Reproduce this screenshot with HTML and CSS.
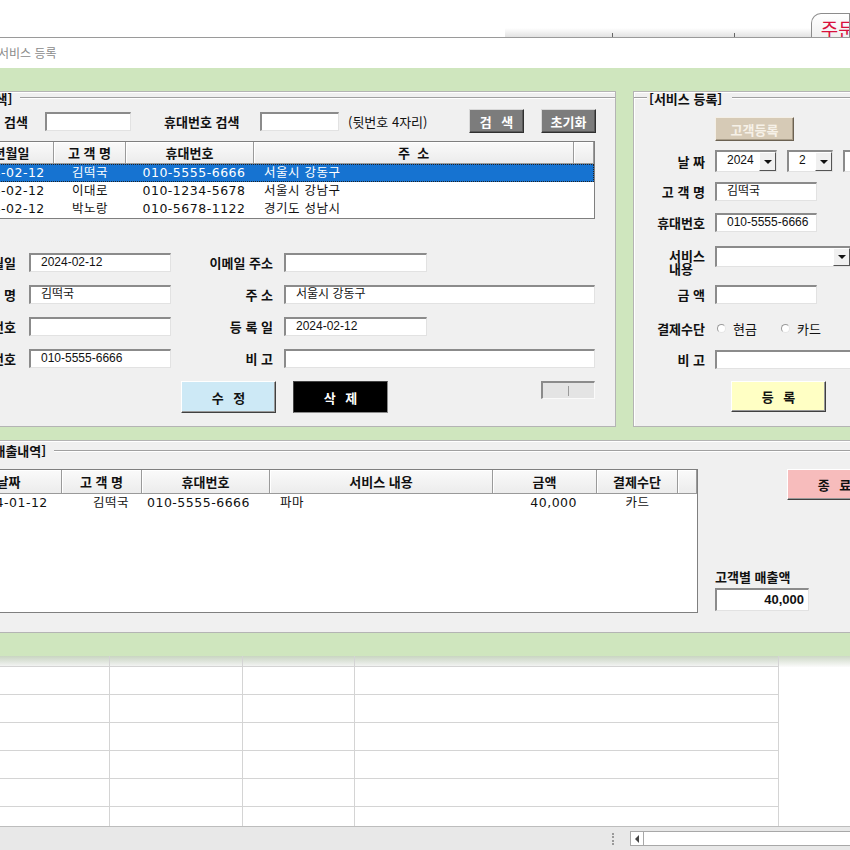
FILE: index.html
```html
<!DOCTYPE html>
<html lang="ko">
<head>
<meta charset="utf-8">
<title>서비스 등록</title>
<link rel="stylesheet" href="styles.css">
</head>
<body>
<div class="screen">
  <header class="topbar">
    <div class="toolstrip"><span class="tick t1"></span><span class="tick t2"></span></div>
    <div class="tab"><span>주문</span></div>
  </header>
  <div class="titlebar">서비스 등록</div>

  <main class="form-area">
    <div class="upper">
      <!-- customer search panel -->
      <section class="panel panel-search">
        <div class="gtitle"><span class="gtext">[고객 검색]</span><span class="gline"></span></div>

        <div class="srow">
          <div class="lbl sl1">고객명 검색</div>
          <div class="inp si1"></div>
          <div class="lbl sl2">휴대번호 검색</div>
          <div class="inp si2"></div>
          <div class="hint">(뒷번호 4자리)</div>
          <div class="btn btn-gray bs1">검 색</div>
          <div class="btn btn-gray bs2">초기화</div>
        </div>

        <div class="lv lv-cust">
          <div class="lv-head g-cust">
            <div class="th">생년월일</div>
            <div class="th">고 객 명</div>
            <div class="th">휴대번호</div>
            <div class="th">주 &nbsp;소</div>
            <div class="th"></div>
          </div>
          <div class="tr g-cust active">
            <div class="td c">2024-02-12</div><div class="td c">김떡국</div><div class="td c p8">010-5555-6666</div><div class="td l">서울시 강동구</div><div class="td"></div>
          </div>
          <div class="tr g-cust">
            <div class="td c">2024-02-12</div><div class="td c">이대로</div><div class="td c p8">010-1234-5678</div><div class="td l">서울시 강남구</div><div class="td"></div>
          </div>
          <div class="tr g-cust">
            <div class="td c">2024-02-12</div><div class="td c">박노랑</div><div class="td c p8">010-5678-1122</div><div class="td l">경기도 성남시</div><div class="td"></div>
          </div>
        </div>

        <div class="frow first">
          <div class="lbl fl-left">생년월일</div><div class="inp in-left">2024-02-12</div>
          <div class="lbl fl-right">이메일 주소</div><div class="inp in-right"></div>
        </div>
        <div class="frow">
          <div class="lbl fl-left">고 객 명</div><div class="inp in-left">김떡국</div>
          <div class="lbl fl-right">주 소</div><div class="inp in-right wide">서울시 강동구</div>
        </div>
        <div class="frow">
          <div class="lbl fl-left">전화번호</div><div class="inp in-left"></div>
          <div class="lbl fl-right">등 록 일</div><div class="inp in-right">2024-02-12</div>
        </div>
        <div class="frow">
          <div class="lbl fl-left">휴대번호</div><div class="inp in-left">010-5555-6666</div>
          <div class="lbl fl-right">비 고</div><div class="inp in-right wide"></div>
        </div>

        <div class="brow">
          <div class="btn btn-edit">수 정</div>
          <div class="btn btn-del">삭 제</div>
          <div class="mini"><span class="caret"></span></div>
        </div>
      </section>

      <!-- service registration panel -->
      <section class="panel panel-service">
        <div class="gtitle"><span class="gline short"></span><span class="gtext pad">[서비스 등록]</span><span class="gline"></span></div>

        <div class="btn btn-cust">고객등록</div>

        <div class="rrow m9">
          <div class="lbl rl">날 짜</div>
          <div class="combo-box s1"><span class="val">2024</span><span class="arrow"></span></div>
          <div class="combo-box s2"><span class="val">2</span><span class="arrow"></span></div>
          <div class="combo-box s3"><span class="val">12</span><span class="arrow"></span></div>
        </div>
        <div class="rrow m8">
          <div class="lbl rl">고 객 명</div>
          <div class="inp rin">김떡국</div>
        </div>
        <div class="rrow m9">
          <div class="lbl rl">휴대번호</div>
          <div class="inp rin">010-5555-6666</div>
        </div>
        <div class="rrow m12">
          <div class="lbl rl two"><span>서비스<br>내용</span></div>
          <div class="combo-box combo"><span class="val"></span><span class="arrow"></span></div>
        </div>
        <div class="rrow m16">
          <div class="lbl rl">금 액</div>
          <div class="inp rin"></div>
        </div>
        <div class="rrow m12">
          <div class="lbl rl">결제수단</div>
          <div class="radio r1"><span class="dot"></span><span class="rtext">현금</span></div>
          <div class="radio r2"><span class="dot"></span><span class="rtext">카드</span></div>
        </div>
        <div class="rrow m9">
          <div class="lbl rl">비 고</div>
          <div class="inp rin wide"></div>
        </div>
        <div class="btn btn-reg">등 록</div>
      </section>
    </div>

    <!-- sales history panel -->
    <section class="panel panel-sales">
      <div class="gtitle t-sales"><span class="gtext">[고객별 매출내역]</span><span class="gline"></span></div>
      <div class="sales-body">
        <div class="lv lv-sales">
          <div class="lv-head g-sales">
            <div class="th">날짜</div>
            <div class="th">고 객 명</div>
            <div class="th">휴대번호</div>
            <div class="th">서비스 내용</div>
            <div class="th">금액</div>
            <div class="th">결제수단</div>
            <div class="th"></div>
          </div>
          <div class="tr g-sales">
            <div class="td c">2024-01-12</div><div class="td r13">김떡국</div><div class="td l5">010-5555-6666</div><div class="td l">파마</div><div class="td r20">40,000</div><div class="td c">카드</div><div class="td"></div>
          </div>
        </div>
        <div class="sales-side">
          <div class="btn btn-exit">종 료</div>
          <div class="lbl total-lbl">고객별 매출액</div>
          <div class="inp total">40,000</div>
        </div>
      </div>
    </section>
  </main>

  <div class="sheet">
    <div class="cell h"></div><div class="cell h"></div><div class="cell h"></div><div class="cell h"></div><div class="cell h e"></div>
    <div class="cell"></div><div class="cell"></div><div class="cell"></div><div class="cell"></div><div class="cell e"></div>
    <div class="cell"></div><div class="cell"></div><div class="cell"></div><div class="cell"></div><div class="cell e"></div>
    <div class="cell"></div><div class="cell"></div><div class="cell"></div><div class="cell"></div><div class="cell e"></div>
    <div class="cell"></div><div class="cell"></div><div class="cell"></div><div class="cell"></div><div class="cell e"></div>
    <div class="cell"></div><div class="cell"></div><div class="cell"></div><div class="cell"></div><div class="cell e"></div>
    <div class="cell last"></div><div class="cell last"></div><div class="cell last"></div><div class="cell last"></div><div class="cell e"></div>
  </div>

  <footer class="status">
    <span class="grip"></span>
    <div class="hscroll"><span class="harrow"></span></div>
  </footer>
</div>
</body>
</html>
```

FILE: styles.css
```css
* { box-sizing: border-box; }
html, body { margin: 0; padding: 0; }
body {
  width: 850px; height: 850px; overflow: hidden; background: #fff;
  font-family: "Noto Sans CJK KR", sans-serif; font-size: 13px; color: #111;
}
.screen { width: 850px; height: 850px; display: flex; flex-direction: column; overflow: hidden; }

/* top strip */
.topbar { height: 38px; flex: none; display: flex; align-items: flex-end; border-bottom: 1px solid #9a9a9a; }
.toolstrip { margin-left: 505px; width: 313px; height: 9px; background: linear-gradient(#ffffff, #e2e2e2); display: flex; align-items: flex-end; }
.tick { width: 1px; height: 4px; background: #666; }
.tick.t1 { margin-left: 107px; }
.tick.t2 { margin-left: 121px; }
.tab { width: 40px; height: 24px; border: 1px solid #8c8c8c; border-bottom: none; border-top-left-radius: 10px; background: linear-gradient(#fff, #f0f0f0); overflow: hidden; padding-left: 9px; }
.tab span { display: block; color: #d8103c; font-size: 19px; line-height: 20px; margin-top: 5px; white-space: nowrap; }

.titlebar { height: 30px; flex: none; line-height: 30px; font-size: 12px; color: #8a8a8a; text-indent: -2px; }

/* green area */
.form-area { height: 588px; flex: none; background: #cfe6be; padding-top: 23px; display: flex; flex-direction: column; overflow: hidden; }
.upper { display: flex; height: 336px; flex: none; }
.panel { background: #f0f0f0; border: 1px solid #b4b4b4; box-shadow: inset 1px 1px #fff; flex: none; }
.panel-search { margin-left: -50px; width: 666px; }
.panel-service { margin-left: 17px; width: 240px; }
.panel-sales { margin-top: 13px; margin-left: -60px; width: 960px; height: 193px; }

.gtitle { display: flex; align-items: center; height: 12px; }
.gtext { font-weight: 700; font-size: 13px; line-height: 13px; white-space: nowrap; }
.gtext.pad { margin: 0 2px; }
.gline { flex: 1; height: 2px; border-top: 1px solid #a0a0a0; border-bottom: 1px solid #fff; margin-left: 8px; }
.gline.short { flex: none; width: 13px; margin-left: 0; }
.t-sales { margin-top: 3px; height: 13px; }
.t-sales .gtext { margin-left: 8px; }

.lbl { font-weight: 700; font-size: 13px; line-height: 15px; white-space: nowrap; flex: none; }

.inp {
  flex: none; height: 19px; background: #fff;
  border-style: solid; border-width: 2px 1px 1px 2px;
  border-color: #8b8b8b #e2e2e2 #e2e2e2 #8b8b8b;
  font-family: "Liberation Sans", "Noto Sans CJK KR", sans-serif; font-size: 12px; line-height: 15px;
  padding-left: 10px; white-space: nowrap; overflow: hidden; color: #111;
}

.btn {
  flex: none; display: flex; align-items: center; justify-content: center;
  font-weight: 700; font-size: 13px; line-height: 15px; white-space: nowrap; word-spacing: 6px;
  border: 1px solid; border-color: #fff #404040 #404040 #fff;
  box-shadow: inset -1px -1px #999;
}
.btn-gray { background: #7c7c7c; color: #fff; border-color: #d8d8d8 #303030 #303030 #d8d8d8; box-shadow: inset -1px -1px #5a5a5a; height: 24px; width: 55px; }

/* search row */
.srow { display: flex; align-items: center; height: 24px; margin-top: 5px; }
.sl1 { width: 77px; text-align: right; }
.si1 { margin-left: 17px; width: 86px; }
.sl2 { margin-left: 33px; width: 89px; }
.si2 { margin-left: 7px; width: 79px; }
.hint { margin-left: 9px; width: 121px; font-size: 13px; line-height: 15px; white-space: nowrap; flex: none; }
.bs2 { margin-left: 17px; }

/* list views */
.lv { background: #fff; border: 1px solid #7f7f7f; overflow: hidden; flex: none; }
.lv-cust { margin-top: 8px; margin-left: 6px; width: 638px; height: 78px; }
.lv-head { display: grid; height: 22px; }
.th {
  background: linear-gradient(#fafafa, #ececec);
  border-right: 1px solid #9a9a9a; border-bottom: 1px solid #9a9a9a; box-shadow: inset 1px 1px #fff;
  display: flex; align-items: center; justify-content: center;
  font-weight: 700; font-size: 13px; white-space: nowrap; overflow: hidden;
}
.g-cust { grid-template-columns: 96px 72px 128px 320px 1fr; }
.g-sales { grid-template-columns: 106px 80px 128px 223px 104px 81px 1fr; }
.tr { display: grid; height: 18px; align-items: center; font-family: "DejaVu Sans", "Noto Sans CJK KR", sans-serif; font-size: 12.5px; letter-spacing: 0.5px; line-height: 16px; }
.tr.active { background: #1673d1; color: #fff; outline: 1px dotted #222; outline-offset: -1px; }
.td { white-space: nowrap; overflow: hidden; }
.c { text-align: center; }
.p8 { padding-left: 8px; }
.l { padding-left: 10px; }
.l5 { padding-left: 5px; }
.r13 { text-align: right; padding-right: 13px; }
.r20 { text-align: right; padding-right: 20px; }

/* form rows */
.frow { display: flex; align-items: center; height: 19px; margin-top: 13px; }
.frow.first { margin-top: 34px; }
.fl-left { width: 65px; text-align: right; }
.in-left { margin-left: 13px; width: 142px; }
.fl-right { width: 102px; text-align: right; }
.in-right { margin-left: 11px; width: 143px; }
.in-right.wide { width: 311px; }

.brow { display: flex; align-items: flex-start; margin-top: 13px; height: 32px; }
.btn-edit { margin-left: 230px; width: 95px; height: 32px; background: #cde9f6; }
.btn-del { margin-left: 17px; width: 95px; height: 32px; background: #000; color: #fff; border-color: #444 #8a8a8a #8a8a8a #444; box-shadow: none; }
.mini { flex: none; margin-left: 153px; width: 54px; height: 18px; background: #e4e4e4; border-style: solid; border-width: 2px 1px 1px 2px; border-color: #8b8b8b #fafafa #fafafa #8b8b8b; display: flex; align-items: center; justify-content: center; }
.caret { width: 1px; height: 10px; background: #9a9a9a; }

/* service panel */
.btn-cust { margin-top: 13px; margin-left: 81px; width: 79px; height: 24px; background: #d6cab6; color: #f6f1e8; border-color: #f4efe6 #6b6152 #6b6152 #f4efe6; box-shadow: inset -1px -1px #a89c88; word-spacing: 0; }
.rrow { display: flex; align-items: center; height: 22px; }
.m8 { margin-top: 8px; } .m9 { margin-top: 9px; } .m12 { margin-top: 12px; } .m16 { margin-top: 16px; }
.rl { width: 71px; text-align: right; }
.rl.two { align-self: flex-start; margin-top: 4px; line-height: 13px; }
.rl.two span { display: inline-block; text-align: left; }
.rin { margin-left: 10px; width: 102px; }
.rin.wide { width: 140px; }

.combo-box {
  flex: none; height: 22px; display: flex; background: #fff;
  border-style: solid; border-width: 2px 1px 1px 2px; border-color: #8b8b8b #e2e2e2 #e2e2e2 #8b8b8b;
}
.combo-box .val { flex: 1; padding-left: 10px; font-family: "Liberation Sans", sans-serif; font-size: 12px; line-height: 17px; white-space: nowrap; overflow: hidden; }
.combo-box .arrow { flex: none; width: 17px; background: #f0f0f0; border: 1px solid; border-color: #fff #555 #555 #fff; display: flex; align-items: center; justify-content: center; }
.combo-box .arrow::after { content: ""; border-left: 4px solid transparent; border-right: 4px solid transparent; border-top: 4px solid #111; }
.s1 { margin-left: 10px; width: 62px; }
.s2 { margin-left: 10px; width: 46px; }
.s3 { margin-left: 10px; width: 46px; }
.combo { margin-left: 10px; width: 136px; height: 21px; }

.radio { flex: none; display: flex; align-items: center; }
.r1 { margin-left: 12px; }
.r2 { margin-left: 24px; }
.dot { width: 9px; height: 9px; border-radius: 50%; border: 1px solid #9a9a9a; border-right-color: #e6e6e6; border-bottom-color: #e6e6e6; background: #fff; }
.rtext { margin-left: 7px; font-size: 13px; line-height: 15px; white-space: nowrap; }

.btn-reg { margin-top: 11px; margin-left: 97px; width: 95px; height: 31px; background: #ffffc4; }

/* sales panel */
.sales-body { display: flex; margin-top: 12px; }
.lv-sales { margin-left: 14px; width: 743px; height: 144px; }
.lv-sales .lv-head { height: 24px; }
.sales-side { flex: none; margin-left: 17px; width: 185px; height: 144px; display: flex; flex-direction: column; align-items: flex-start; }
.btn-exit { margin-left: 72px; width: 95px; height: 31px; background: #f7bcbc; }
.total-lbl { margin-top: auto; line-height: 14px; margin-bottom: 4px; }
.total { width: 94px; height: 23px; margin-bottom: 2px; text-align: right; padding-right: 4px; font-weight: 700; font-size: 13px; line-height: 19px; }

/* spreadsheet below */
.sheet { height: 170px; flex: none; display: grid; grid-template-columns: 110px 133px 112px 424px 71px; grid-template-rows: 11px 28px 28px 28px 28px 28px 19px; background: #fff; }
.cell { border-right: 1px solid #d4d4d4; border-bottom: 1px solid #d4d4d4; }
.cell.h { background: linear-gradient(#c9d5c2, #f2f3f2); }
.cell.e { border: none; }
.cell.h.e { background: linear-gradient(#cdd8c6, #fbfbfb); }
.cell.last { border-bottom: none; }

.status { height: 24px; flex: none; background: #e8e8e8; border-top: 1px solid #bdbdbd; display: flex; align-items: center; }
.grip { flex: none; margin-left: 612px; width: 2px; height: 12px; border-left: 2px dotted #9a9a9a; }
.hscroll { flex: none; margin-left: 16px; width: 230px; height: 15px; border: 1px solid #a8a8a8; background: #fff; display: flex; }
.harrow { width: 13px; border-right: 1px solid #a8a8a8; display: flex; align-items: center; justify-content: center; }
.harrow::after { content: ""; border-top: 4px solid transparent; border-bottom: 4px solid transparent; border-right: 4px solid #444; }
```
